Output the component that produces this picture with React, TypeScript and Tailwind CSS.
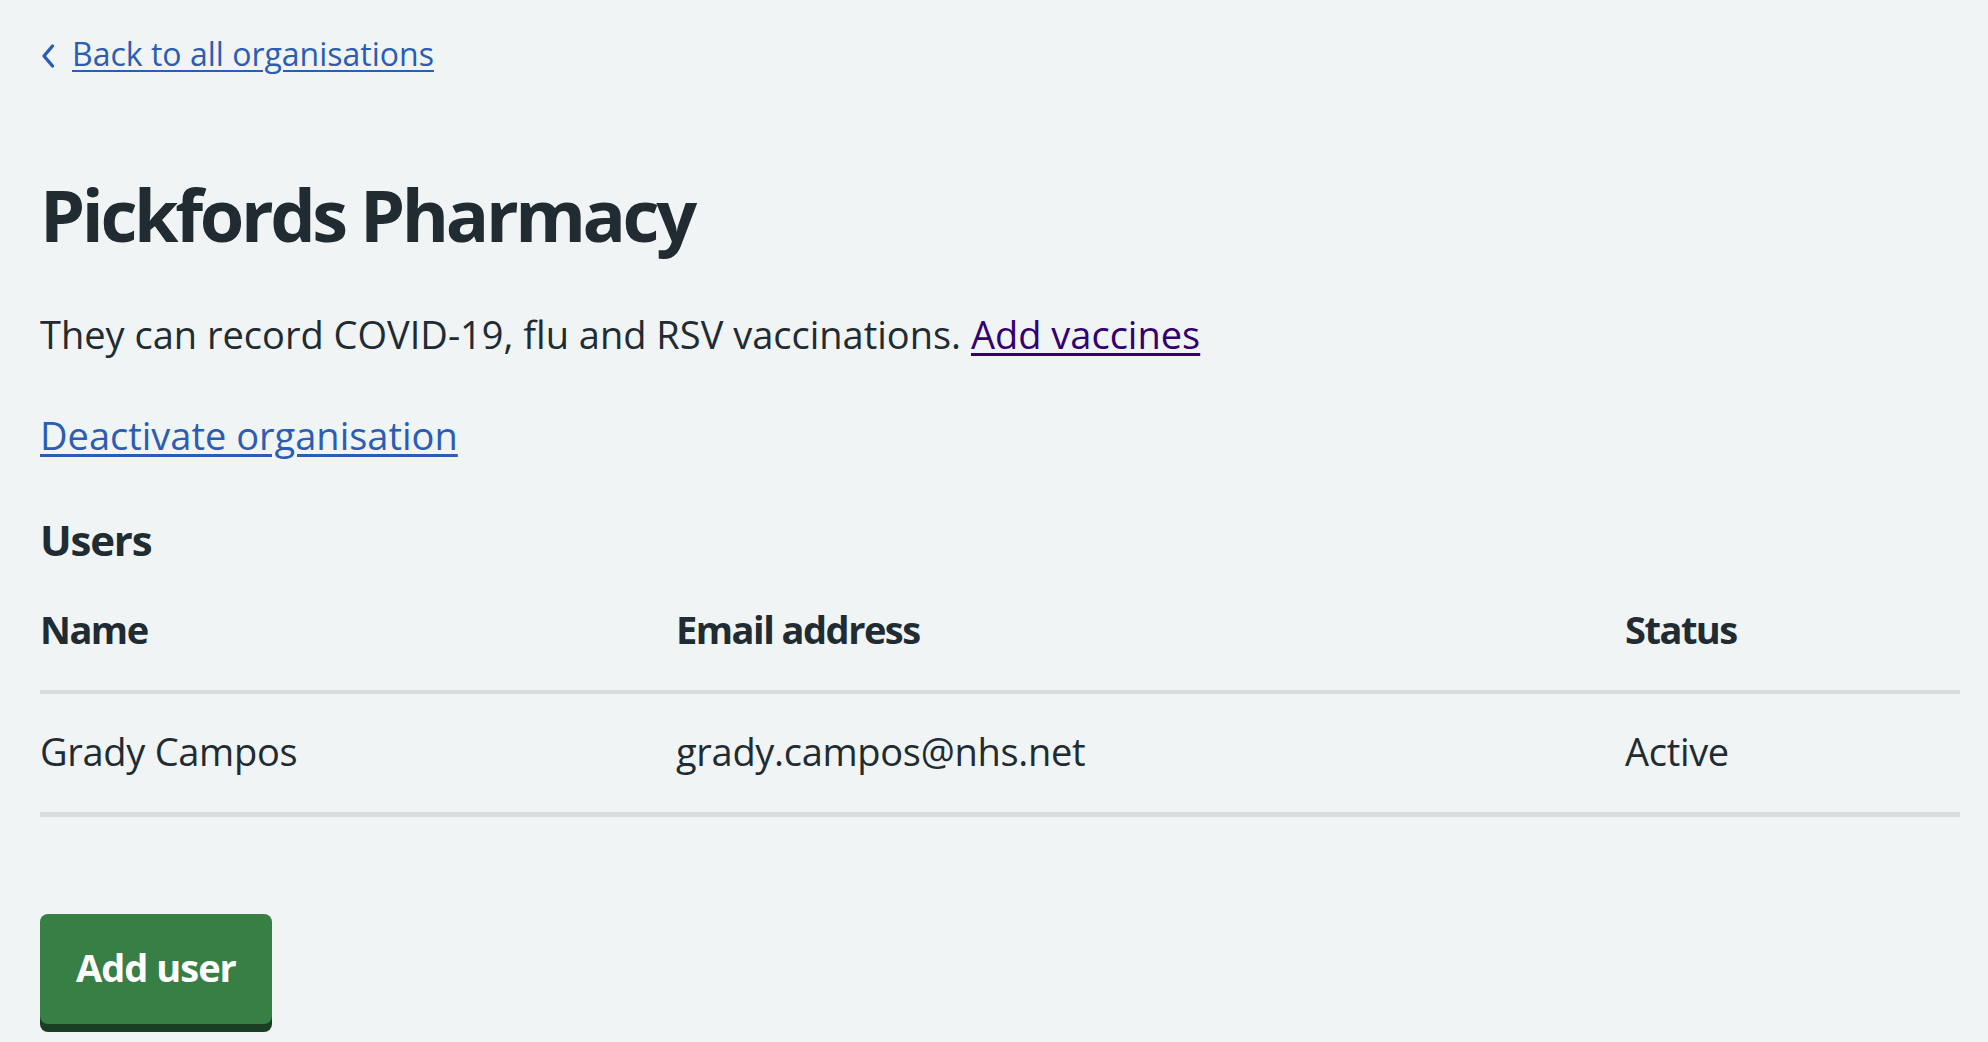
import React from "react";

export default function App() {
  return (
    <div className="min-h-screen w-full bg-[#f0f4f5] text-[#212b32] font-['Open_Sans',sans-serif]">
      <div className="pl-[40px] pr-[28px] pt-[34px] pb-[10px]">
        <a href="#" className="flex items-center gap-[16px] text-[32px] leading-[40px] text-[#2a5db3]">
          <svg width="16" height="26" viewBox="0 0 16 26" className="shrink-0 translate-y-[2px]">
            <path d="M12.5 3 L4 13 L12.5 23" fill="none" stroke="#2a5db3" strokeWidth="3.4" strokeLinecap="round" strokeLinejoin="round" />
          </svg>
          <span className="underline decoration-[2px] underline-offset-[4px]">Back to all organisations</span>
        </a>

        <h1 className="mt-[100px] text-[72px] leading-[80px] font-bold tracking-[-3.4px]">Pickfords Pharmacy</h1>

        <p className="mt-[56px] text-[38px] leading-[48px]">
          They can record COVID-19, flu and RSV vaccinations.{" "}
          <a href="#" className="text-[#330072] underline decoration-[3px] underline-offset-[4px]">Add vaccines</a>
        </p>

        <p className="mt-[53px] text-[38px] leading-[48px]">
          <a href="#" className="text-[#2a5db3] underline decoration-[3px] underline-offset-[4px]">Deactivate organisation</a>
        </p>

        <h2 className="mt-[55px] text-[42px] leading-[52px] font-bold tracking-[-1.2px]">Users</h2>

        <div className="mt-[39px]">
          <div className="grid grid-cols-[636px_949px_1fr] border-b-[4px] border-[#d8dde0] pb-[37px] text-[38px] leading-[48px] font-bold tracking-[-1.5px]">
            <div>Name</div>
            <div>Email address</div>
            <div>Status</div>
          </div>
          <div className="grid grid-cols-[636px_949px_1fr] border-b-[5px] border-[#d8dde0] pt-[33px] pb-[37px] text-[38px] leading-[48px] tracking-[-0.3px]">
            <div>Grady Campos</div>
            <div>grady.campos@nhs.net</div>
            <div>Active</div>
          </div>
        </div>

        <button className="mt-[97px] w-[232px] rounded-[8px] bg-[#387f46] pt-[29px] pb-[33px] text-center text-[38px] leading-[48px] font-bold tracking-[-1px] text-white shadow-[0_8px_0_#1b3e22]">
          Add user
        </button>
      </div>
    </div>
  );
}
